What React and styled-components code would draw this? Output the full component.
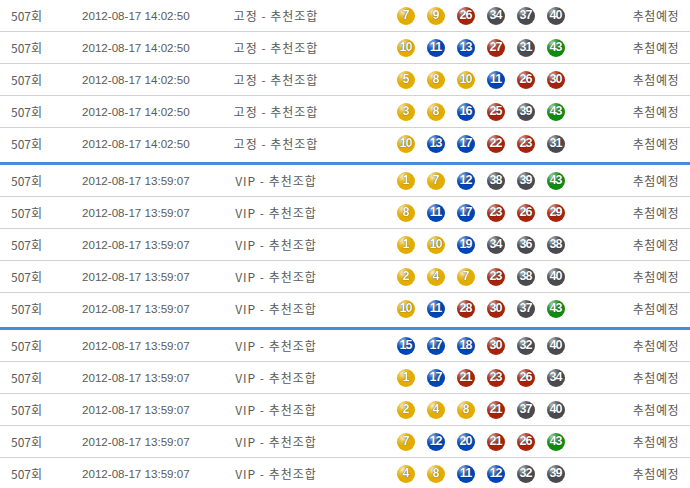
import React from 'react';
import styled, { createGlobalStyle } from 'styled-components';

const GlobalStyle = createGlobalStyle`
  html, body {
    margin: 0;
    padding: 0;
    background: #fff;
  }
  body {
    font-family: "Noto Sans CJK KR", "Liberation Sans", sans-serif;
    color: #5a5a5a;
    overflow: hidden;
  }
`;

const groups = [
  {
    time: '2012-08-17 14:02:50',
    kind: '고정 - 추천조합',
    rows: [
      [7, 9, 26, 34, 37, 40],
      [10, 11, 13, 27, 31, 43],
      [5, 8, 10, 11, 26, 30],
      [3, 8, 16, 25, 39, 43],
      [10, 13, 17, 22, 23, 31],
    ],
  },
  {
    time: '2012-08-17 13:59:07',
    kind: 'VIP - 추천조합',
    rows: [
      [1, 7, 12, 38, 39, 43],
      [8, 11, 17, 23, 26, 29],
      [1, 10, 19, 34, 36, 38],
      [2, 4, 7, 23, 38, 40],
      [10, 11, 28, 30, 37, 43],
    ],
  },
  {
    time: '2012-08-17 13:59:07',
    kind: 'VIP - 추천조합',
    rows: [
      [15, 17, 18, 30, 32, 40],
      [1, 17, 21, 23, 26, 34],
      [2, 4, 8, 21, 37, 40],
      [7, 12, 20, 21, 26, 43],
      [4, 8, 11, 12, 32, 39],
    ],
  },
];

const ballColors = {
  yellow: '#e2ad00',
  blue: '#0045b8',
  red: '#a5240c',
  grey: '#4a4a50',
  green: '#118a10',
};

function colorOf(n) {
  if (n <= 10) return ballColors.yellow;
  if (n <= 20) return ballColors.blue;
  if (n <= 30) return ballColors.red;
  if (n <= 40) return ballColors.grey;
  return ballColors.green;
}

export default function App() {
  return (
    <>
      <GlobalStyle />
      <List>
        {groups.map((g, gi) => (
          <Group key={gi}>
            {g.rows.map((nums, ri) => (
              <Row key={ri}>
                <Round>507회</Round>
                <Time>{g.time}</Time>
                <Kind>{g.kind}</Kind>
                <Balls>
                  {nums.map(n => (
                    <Ball key={n} $color={colorOf(n)}>
                      {n}
                    </Ball>
                  ))}
                </Balls>
                <Result>추첨예정</Result>
              </Row>
            ))}
          </Group>
        ))}
      </List>
    </>
  );
}

const List = styled.div`
  width: 690px;
`;

const Group = styled.div`
  padding-bottom: 2px;
  border-bottom: 3px solid #428fd8;
`;

const Row = styled.div`
  display: grid;
  grid-template-columns: 82px 118px 152px 258px 1fr;
  align-items: center;
  height: 31px;
  border-bottom: 1px solid #cfd3d6;
  font-size: 12px;
  line-height: 1;

  ${Group} &:last-child {
    border-bottom-color: #fff;
  }
`;

const Round = styled.div`
  padding-left: 11px;
`;

const Time = styled.div`
  font-family: "Liberation Sans", sans-serif;
  font-size: 11.6px;
`;

const Kind = styled.div`
  text-align: center;
  letter-spacing: 1px;
`;

const Balls = styled.div`
  display: flex;
  justify-content: center;
  gap: 12px;
`;

const Ball = styled.span`
  width: 18px;
  height: 18px;
  border-radius: 50%;
  display: flex;
  align-items: center;
  justify-content: center;
  background:
    radial-gradient(circle at 32% 26%, rgba(255, 255, 255, 0.8) 0, rgba(255, 255, 255, 0.2) 25%, rgba(255, 255, 255, 0) 45%),
    ${p => p.$color};
  color: #fff;
  font-family: "Liberation Sans", sans-serif;
  font-weight: bold;
  font-size: 12.5px;
  letter-spacing: -0.8px;
  text-indent: -0.8px;
  text-shadow: 0 0 1px rgba(0, 0, 0, 0.9);
`;

const Result = styled.div`
  text-align: right;
  padding-right: 11px;
  letter-spacing: 0.5px;
`;
